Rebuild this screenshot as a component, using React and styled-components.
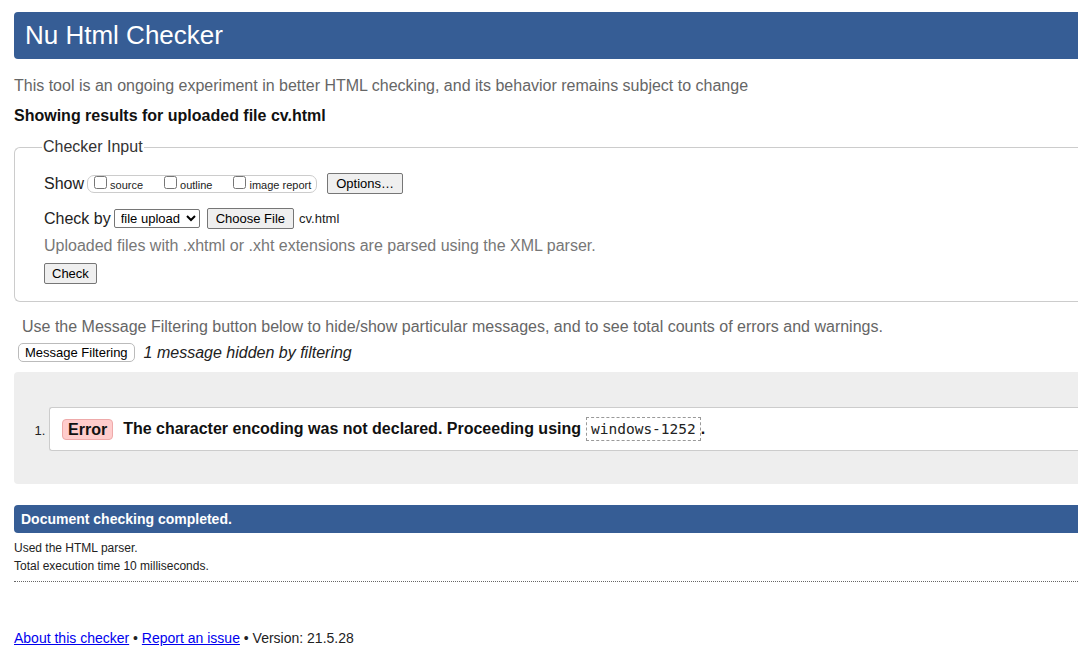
import styled, { createGlobalStyle } from "styled-components";

const GlobalStyle = createGlobalStyle`
  html, body {
    margin: 0;
    padding: 0;
    background: #fff;
    overflow: hidden;
  }
  body {
    font-family: "Liberation Sans", Arial, sans-serif;
    color: #222;
  }
`;

// page runs past the right edge of the window, like the original
const Page = styled.div`
  width: 1120px;
  padding: 12px 0 0 14px;
`;

const Header = styled.h1`
  margin: 0;
  height: 47px;
  display: flex;
  align-items: center;
  padding-left: 11px;
  background: #365d95;
  color: #fff;
  font-size: 26px;
  font-weight: normal;
  border-radius: 4px 0 0 4px;
`;

const Intro = styled.p`
  margin: 17px 0 0;
  font-size: 16px;
  color: #666;
  line-height: 19px;
`;

const Results = styled.p`
  margin: 11px 0 0;
  font-size: 16px;
  font-weight: bold;
  color: #111;
  line-height: 19px;
`;

const Fieldset = styled.fieldset`
  margin: 13px 0 0;
  padding: 17px 29px 17px;
  border: 1px solid #ccc;
  border-radius: 6px 0 0 6px;
  border-right: none;
`;

const Legend = styled.legend`
  font-size: 16px;
  color: #333;
  padding: 0 1px;
  margin-left: -2px;
`;

const Row = styled.div`
  display: flex;
  align-items: center;
  font-size: 16px;
  color: #222;
  margin-top: ${p => p.$mt || 0}px;
`;

const Label = styled.span`
  margin-right: 3px;
`;

const CheckGroup = styled.span`
  display: inline-flex;
  align-items: center;
  height: 16px;
  border: 1px solid #ccc;
  border-radius: 7px;
  padding: 0 5px 0 3px;
  margin-right: 10px;
`;

const CheckItem = styled.label`
  display: inline-flex;
  align-items: center;
  font-size: 11px;
  color: #222;
  margin-right: ${p => p.$gap || 0}px;

  input {
    margin: 0 3px 2px 3px;
    width: 13px;
    height: 13px;
  }

  span {
    padding-top: 3px;
  }
`;

const Btn = styled.button`
  font-family: "Liberation Sans", Arial, sans-serif;
  font-size: 13px;
  color: #000;
  background: #efefef;
  border: 1px solid #767676;
  border-radius: 2px;
  height: ${p => p.$h || 21}px;
  padding: 0 ${p => p.$px || 8}px;
  margin-right: ${p => p.$mr || 0}px;
`;

const Select = styled.select`
  font-family: "Liberation Sans", Arial, sans-serif;
  font-size: 13px;
  height: 19px;
  width: 86px;
  padding: 0 0 0 2px;
  border: 1px solid #767676;
  border-radius: 2px;
  background: #fff;
  color: #000;
  margin-right: 7px;
`;

const FileName = styled.span`
  font-size: 13px;
  margin-left: 5px;
`;

const Hint = styled.p`
  margin: 7px 0 0;
  font-size: 16px;
  color: #777;
  line-height: 19px;
`;

const FilterNote = styled.p`
  margin: 15px 0 0 8px;
  font-size: 16px;
  color: #666;
  line-height: 19px;
`;

const FilterRow = styled.div`
  display: flex;
  align-items: center;
  margin: 7px 0 0 4px;
`;

const FilterBtn = styled.button`
  font-family: "Liberation Sans", Arial, sans-serif;
  font-size: 13px;
  color: #000;
  background: #fff;
  border: 1px solid #bbb;
  border-radius: 5px;
  height: 19px;
  padding: 0 6px;
  margin-right: 9px;
`;

const Hidden = styled.em`
  font-size: 16px;
  color: #222;
`;

const MessageBox = styled.div`
  margin-top: 10px;
  background: #eee;
  border-radius: 4px 0 0 4px;
  padding: 35px 0 33px;
`;

const List = styled.ol`
  margin: 0;
  padding: 0 0 0 35px;
`;

const Item = styled.li`
  font-size: 13px;
  color: #222;

  &::marker {
    font-size: 13px;
  }
`;

const ItemCard = styled.div`
  display: flex;
  align-items: center;
  height: 42px;
  background: #fff;
  border: 1px solid #ccc;
  border-right: none;
  border-radius: 3px 0 0 3px;
  padding-left: 12px;
  font-size: 16px;
  font-weight: bold;
  color: #111;
`;

const Badge = styled.strong`
  background: #fcc;
  border: 1px solid #eaa;
  border-radius: 4px;
  padding: 1px 5px 1px 5px;
  margin-right: 10px;
  line-height: 17px;
`;

const Code = styled.code`
  font-family: "DejaVu Sans Mono", "Liberation Mono", monospace;
  font-size: 14.5px;
  font-weight: normal;
  border: 1px dashed #999;
  padding: 3px 4px 3px;
  margin-left: 5px;
  line-height: 16px;
  color: #222;
`;

const DoneBar = styled.h2`
  margin: 21px 0 0;
  height: 28px;
  display: flex;
  align-items: center;
  padding-left: 7px;
  background: #365d95;
  color: #fff;
  font-size: 14px;
  font-weight: bold;
  border-radius: 4px 0 0 4px;
`;

const Detail = styled.p`
  margin: ${p => p.$mt || 0}px 0 0;
  font-size: 12px;
  color: #222;
  line-height: 14px;
`;

const Rule = styled.hr`
  margin: 8px 0 0;
  border: none;
  border-top: 1px dotted #666;
`;

const Footer = styled.p`
  margin: 48px 0 0;
  font-size: 14px;
  color: #222;

  a {
    color: #00e;
  }
`;

export default function App() {
  return (
    <>
      <GlobalStyle />
      <Page>
        <Header>Nu Html Checker</Header>
        <Intro>This tool is an ongoing experiment in better HTML checking, and its behavior remains subject to change</Intro>
        <Results>Showing results for uploaded file cv.html</Results>

        <Fieldset>
          <Legend>Checker Input</Legend>
          <Row>
            <Label>Show</Label>
            <CheckGroup>
              <CheckItem $gap={18}><input type="checkbox" /><span>source</span></CheckItem>
              <CheckItem $gap={18}><input type="checkbox" /><span>outline</span></CheckItem>
              <CheckItem><input type="checkbox" /><span>image report</span></CheckItem>
            </CheckGroup>
            <Btn $px={8}>Options…</Btn>
          </Row>
          <Row $mt={14}>
            <Label>Check by</Label>
            <Select defaultValue="file">
              <option value="file">file upload</option>
            </Select>
            <Btn $px={8}>Choose File</Btn>
            <FileName>cv.html</FileName>
          </Row>
          <Hint>Uploaded files with .xhtml or .xht extensions are parsed using the XML parser.</Hint>
          <Row $mt={8}>
            <Btn $px={7}>Check</Btn>
          </Row>
        </Fieldset>

        <FilterNote>Use the Message Filtering button below to hide/show particular messages, and to see total counts of errors and warnings.</FilterNote>
        <FilterRow>
          <FilterBtn>Message Filtering</FilterBtn>
          <Hidden>1 message hidden by filtering</Hidden>
        </FilterRow>

        <MessageBox>
          <List>
            <Item>
              <ItemCard>
                <Badge>Error</Badge>
                The character encoding was not declared. Proceeding using
                <Code>windows-1252</Code>.
              </ItemCard>
            </Item>
          </List>
        </MessageBox>

        <DoneBar>Document checking completed.</DoneBar>
        <Detail $mt={8}>Used the HTML parser.</Detail>
        <Detail $mt={4}>Total execution time 10 milliseconds.</Detail>
        <Rule />

        <Footer>
          <a href="#about">About this checker</a> • <a href="#issue">Report an issue</a> • Version: 21.5.28
        </Footer>
      </Page>
    </>
  );
}
